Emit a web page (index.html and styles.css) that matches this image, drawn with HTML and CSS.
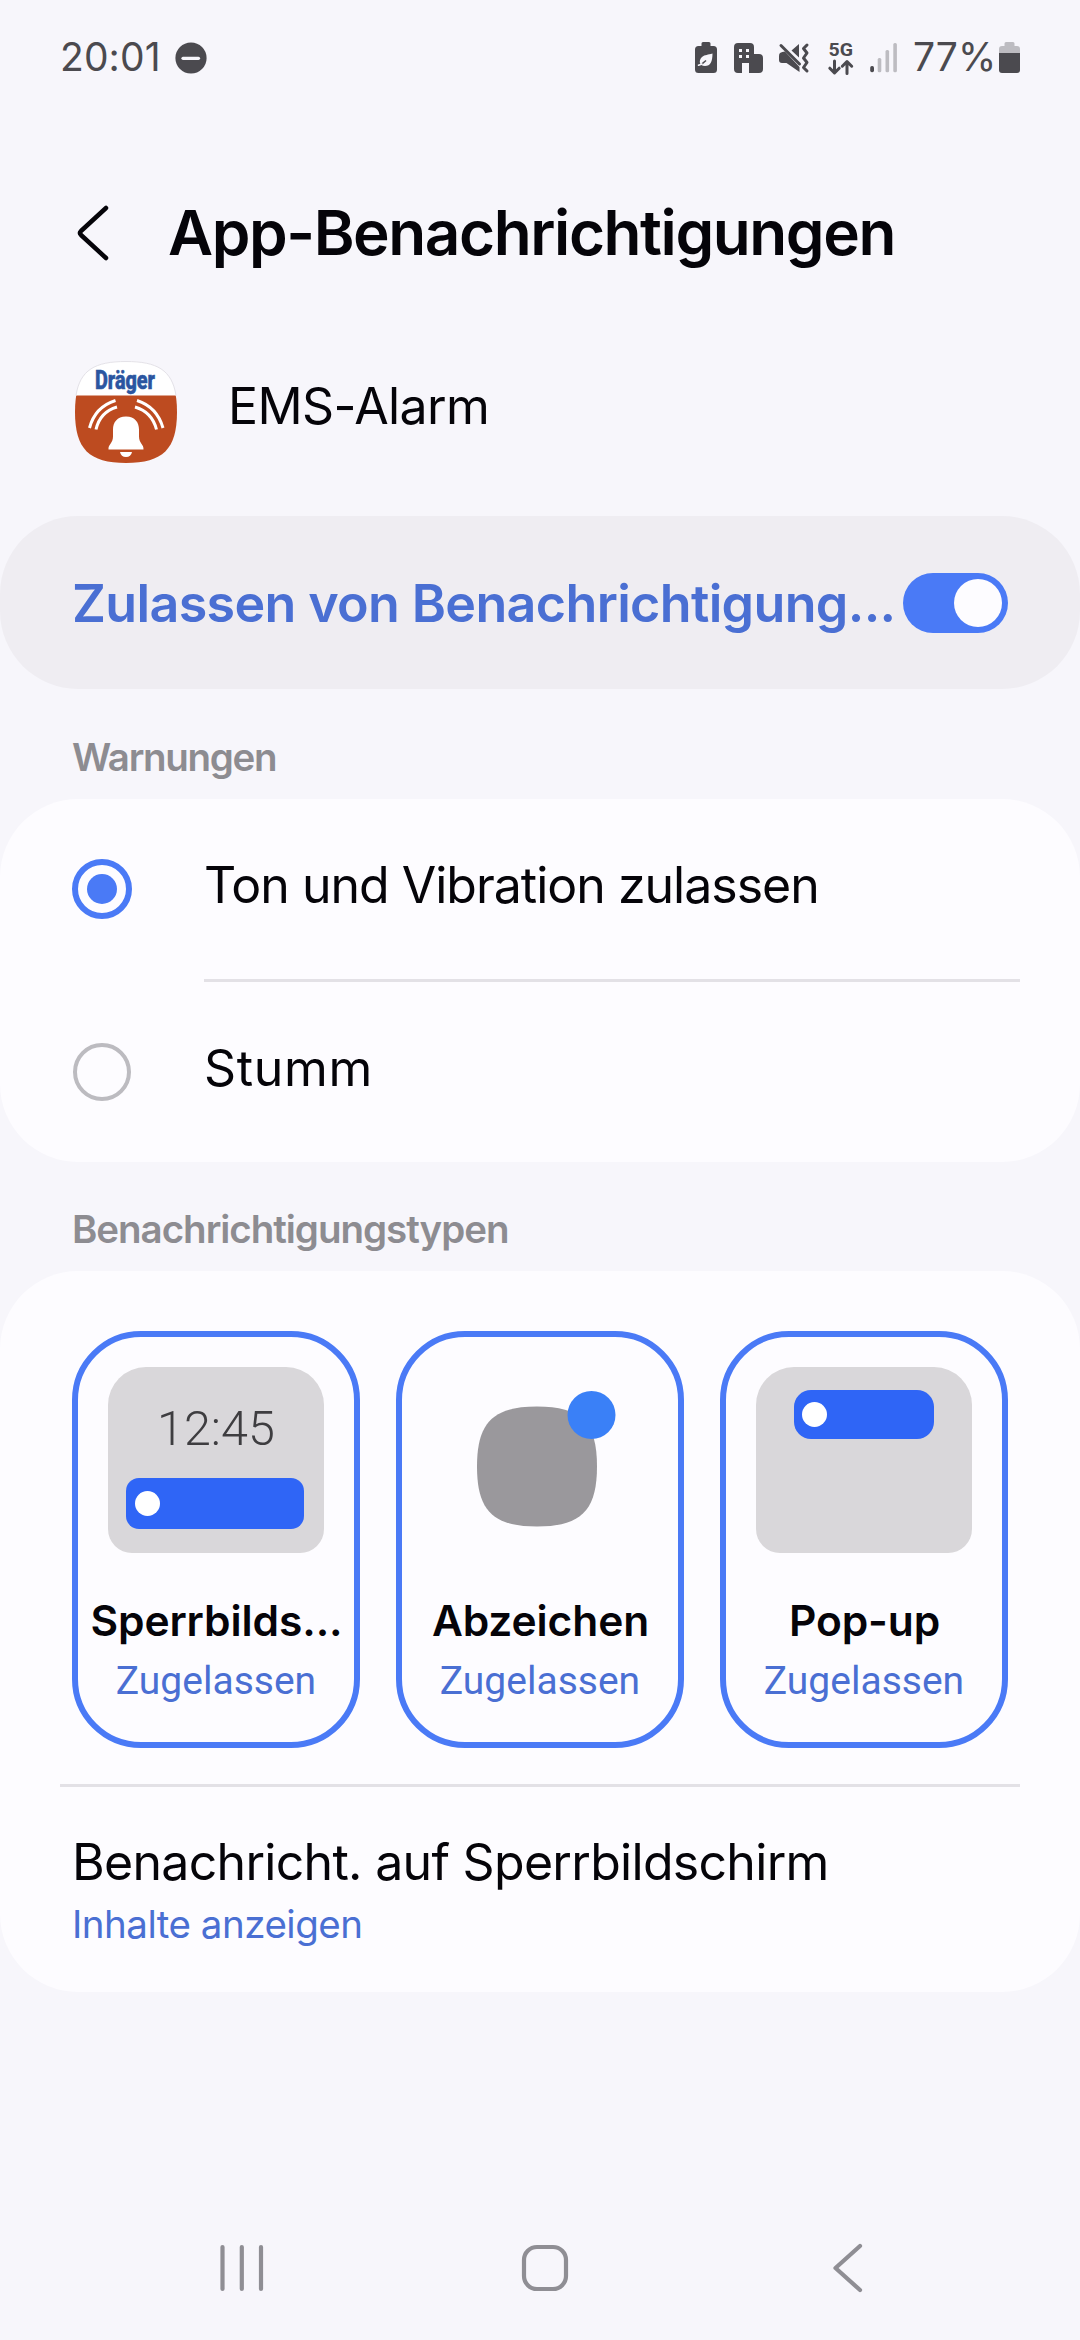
FILE: index.html
```html
<!DOCTYPE html>
<html lang="de">
<head>
<meta charset="utf-8">
<title>App-Benachrichtigungen</title>
<link rel="stylesheet" href="styles.css">
</head>
<body>
<div class="screen">
  <header class="status">
    <span class="time">20:01</span>
    <svg class="dnd" viewBox="0 0 32 32"><circle cx="16" cy="16" r="15.6"/><path d="M8 16.3H23.5"/></svg>
    <div class="status-right">
      <svg class="si leaf" viewBox="695 40 22 36"><path class="dk" d="M703 42h6q1.500 0 1.500 1.500v2.500h3q3.500 0 3.500 3.500v20q0 3.500-3.500 3.500h-15q-3.500 0-3.500-3.500v-20q0-3.500 3.500-3.500h3v-2.500q0-1.500 1.500-1.500z"/><path class="lt" d="M712.500 53.500c0 8-2 12.500-7.500 12.500-6 0-6.500-6-3-9 3-2.500 6-2 10.500-3.500z"/><path class="cut" d="M706 60.500l-4 3.300"/><path class="vein" d="M702 64l-3.500 1.200"/></svg>
      <svg class="si building" viewBox="734 40 29 36"><path class="dk" d="M738 43h12q4 0 4 4v7h5q4 0 4 4v11q0 4-4 4h-10v-10h-7v10h-4q-4 0-4-4v-22q0-4 4-4z"/><g class="lt"><rect x="739" y="49" width="3" height="3"/><rect x="746" y="49" width="3" height="3"/><rect x="739" y="55" width="3" height="3"/><rect x="746" y="55" width="3" height="3"/></g></svg>
      <svg class="si mute" viewBox="779 40 30 36"><path class="dk" d="M791.500 50.500L799 44v13.500zM780 53q-1 1-1 3v4q0 3 3 3h4.500L799.500 72v-5L785 51.500q-3 0-5 1.500z"/><path class="ln" d="M781 45.500L799.500 64"/><path class="ln" d="M807 45l-3.500 3.500 3.500 4.500-3.500 5 3.500 4.500-3.500 5 3.500 3.500"/></svg>
      <svg class="si net" viewBox="828 40 26 36"><text class="net-text" x="828.500" y="56" textLength="24.500" lengthAdjust="spacingAndGlyphs">5G</text><path class="ln" d="M834.500 61v11.500M829.800 68.200l4.700 4.700 4.700-4.700M847 73.500V62M842.300 66.200l4.700-4.700 4.700 4.700"/></svg>
      <svg class="si signal" viewBox="870 40 27 36"><rect class="dk" x="870.200" y="66" width="3.800" height="6.300" rx="1.700"/><g class="dim"><rect x="877.700" y="58" width="3.600" height="14.300" rx="1.500"/><rect x="885.500" y="50" width="3.600" height="22.300" rx="1.500"/><rect x="893.300" y="43" width="3.600" height="29.300" rx="1.500"/></g></svg>
      <span class="percent">77%</span>
      <svg class="si batt" viewBox="999 40 21 36"><path class="dim" d="M1006 42h7q1.500 0 1.500 1.500v2.500h2.500q3 0 3 3v5h-21v-5q0-3 3-3h2.500v-2.500q0-1.500 1.500-1.500z"/><path class="dk" d="M999 53h21v17q0 3-3 3h-15q-3 0-3-3z"/></svg>
    </div>
  </header>

  <div class="titlebar">
    <svg class="back" viewBox="76 202 36 60"><path d="M106 207L81 230q-2 2 0 4L106 257"/></svg>
    <h1>App-Benachrichtigungen</h1>
  </div>

  <div class="app">
    <svg class="app-icon" viewBox="0 0 102 102">
      <defs><clipPath id="squircle"><path d="M51 0C88 0 102 14 102 51S88 102 51 102 0 88 0 51 14 0 51 0z"/></clipPath></defs>
      <g clip-path="url(#squircle)"><rect width="102" height="102" fill="#fff"/><rect y="34.500" width="102" height="68" fill="#bd4b20"/></g>
      <path d="M1 34.500C5 9 20 .5 51 .5S97 9 101 34.500" fill="none" stroke="#e4e2e8"/>
      <text class="brand" x="20" y="28" textLength="60" lengthAdjust="spacingAndGlyphs">Dräger</text>
      <g fill="none" stroke="#fff" stroke-width="3"><path d="M14.500 67Q20 46 40.500 39.500M21 68.500Q25 51 42 46M88 67Q82 46 62 39.500M81.500 68.500Q77 51 60 46"/></g>
      <path fill="#fff" d="M51 55.500c9 0 13 6 13 13v7c0 7 5 8 4.500 13H33.500c-.5-5 4.500-6 4.500-13v-7c0-7 4-13 13-13zM45 91h12q-1 5-6 5t-6-5z"/>
    </svg>
    <span class="app-name">EMS-Alarm</span>
  </div>

  <section class="allow">
    <span class="allow-text">Zulassen von Benachrichtigung...</span>
    <span class="switch"><span class="knob"></span></span>
  </section>

  <h2 class="label l1">Warnungen</h2>
  <section class="card">
    <div class="option"><span class="radio on"><span class="dot"></span></span><span class="option-text t1">Ton und Vibration zulassen</span></div>
    <div class="line inset"></div>
    <div class="option"><span class="radio"></span><span class="option-text t2">Stumm</span></div>
  </section>

  <h2 class="label l2">Benachrichtigungstypen</h2>
  <section class="card types">
    <div class="tiles">
      <div class="tile">
        <div class="preview lock"><span class="clock">12:45</span><span class="bar wide"><span class="pin"></span></span></div>
        <span class="name">Sperrbilds...</span><span class="state">Zugelassen</span>
      </div>
      <div class="tile">
        <svg class="badge" viewBox="0 0 216 186"><path d="M105 39.500c44 0 60 16 60 60s-16 60-60 60-60-16-60-60 16-60 60-60z" fill="#9a989c"/><circle cx="159.500" cy="48" r="24" fill="#3a80f7"/></svg>
        <span class="name">Abzeichen</span><span class="state">Zugelassen</span>
      </div>
      <div class="tile">
        <div class="preview popup"><span class="bar"><span class="pin"></span></span></div>
        <span class="name">Pop-up</span><span class="state">Zugelassen</span>
      </div>
    </div>
    <div class="line"></div>
    <div class="entry"><span class="entry-title">Benachricht. auf Sperrbildschirm</span><span class="entry-sub">Inhalte anzeigen</span></div>
  </section>

  <nav class="nav">
    <svg viewBox="0 0 60 60"><path d="M10.500 9V51M29.800 9V51M49 9V51"/></svg>
    <svg viewBox="0 0 60 60"><rect x="9" y="9" width="42" height="42" rx="13"/></svg>
    <svg viewBox="0 0 60 60"><path d="M42 8L17.500 30 42 52"/></svg>
  </nav>
</div>
</body>
</html>
```
FILE: styles.css
```css
*, *::before { box-sizing: border-box; }
body { margin: 0; background: #f7f6fb; }
.screen {
  width: 1080px; height: 2340px; display: flex; flex-direction: column;
  font-family: Inter, Roboto, sans-serif; color: #050409; white-space: nowrap;
}
svg { display: block; flex: none; overflow: visible; }
h1, h2 { margin: 0; }

/* status bar */
.status { height: 116px; padding: 0 60px; display: flex; align-items: center; color: #4b4a4f; }
.time, .percent { font-size: 39px; line-height: 40px; padding-bottom: 2px; font-weight: 370; }
.time { width: 99px; letter-spacing: .1px; }
.dnd { width: 32px; height: 32px; margin-left: 16px; fill: #4b4a4f; }
.dnd path { stroke: #f7f6fb; stroke-width: 3.200; stroke-linecap: round; }
.status-right { margin-left: auto; display: flex; align-items: center; }
.si { height: 36px; }
.dk { fill: #4b4a4f; }
.lt { fill: #f7f6fb; }
.dim { fill: #bdbcc1; }
.cut { fill: none; stroke: #4b4a4f; stroke-width: 1.500; }
.vein { fill: none; stroke: #f7f6fb; stroke-width: 1.500; stroke-linecap: round; }
.ln { fill: none; stroke: #4b4a4f; stroke-width: 3; stroke-linecap: round; stroke-linejoin: round; }
.leaf { width: 22px; margin-right: 17px; }
.building { width: 29px; margin-right: 16px; }
.mute { width: 30px; margin-right: 19px; }
.net { width: 26px; margin-right: 16px; }
.net-text { font: 700 19px Roboto, sans-serif; fill: #4b4a4f; }
.signal { width: 27px; }
.percent { width: 86px; margin-left: 16px; }
.batt { width: 21px; }

/* header */
.titlebar { height: 233px; padding-left: 76px; display: flex; align-items: center; }
.back { width: 36px; height: 60px; margin-right: 56px; }
.back path { fill: none; stroke: #050409; stroke-width: 4.500; stroke-linecap: round; stroke-linejoin: round; }
h1 { font-size: 62px; line-height: 80px; font-weight: 600; letter-spacing: -1.420px; }
.app { height: 123px; margin-bottom: 44px; padding: 12px 75px 9px; display: flex; }
.app-icon { width: 102px; height: 102px; }
.brand { font: 800 25px Roboto, sans-serif; fill: #2b55a0; stroke: #2b55a0; stroke-width: .6px; }
.app-name { margin-left: 51px; font-size: 50px; line-height: 90px; letter-spacing: -.6px; }

/* main switch */
.allow {
  height: 173px; padding: 0 72px; border-radius: 78px; background: #efedf2;
  display: flex; align-items: center; justify-content: space-between;
}
.allow-text { font-size: 52px; line-height: 60px; padding-top: 3px; font-weight: 600; letter-spacing: -.65px; color: #4a6fd3; }
.switch { width: 105px; height: 60px; padding: 6px; border-radius: 30px; background: #4a7af6; display: flex; justify-content: flex-end; }
.knob { width: 48px; height: 48px; border-radius: 50%; background: #fdfcff; }

/* groups */
.label { padding-left: 72px; font-size: 38.500px; line-height: 50px; font-weight: 600; color: #8d8c91; }
.l1 { height: 110px; padding-top: 43px; letter-spacing: -1.300px; }
.l2 { height: 109px; padding-top: 42px; letter-spacing: -1.030px; }
.card { border-radius: 78px; background: #fdfcff; }
.option { height: 180px; padding-left: 72px; display: flex; align-items: center; }
.radio { width: 60px; height: 60px; display: flex; align-items: center; justify-content: center; }
.radio::before { content: ""; width: 58px; height: 58px; border: 4.500px solid #bcbbc0; border-radius: 50%; }
.radio.on { border: 6px solid #4a7af6; border-radius: 50%; }
.radio.on::before { content: none; }
.dot { width: 30px; height: 30px; border-radius: 50%; background: #4a7af6; }
.option-text { margin-left: 72px; padding-bottom: 8px; font-size: 50px; line-height: 60px; }
.t1 { letter-spacing: -1px; }
.t2 { letter-spacing: .7px; }
.line { height: 3px; margin: 0 60px; background: #e3e1e6; }
.line.inset { margin-left: 204px; }

/* type tiles */
.types { height: 721px; padding-top: 60px; }
.tiles { display: grid; grid-template-columns: repeat(3, 288px); gap: 36px; padding: 0 72px; margin-bottom: 36px; }
.tile { height: 417px; border: 6px solid #4a7af6; border-radius: 69px; padding-top: 30px; display: flex; flex-direction: column; align-items: center; }
.preview { width: 216px; height: 186px; border-radius: 38px 38px 24px 24px; background: #d9d7da; display: flex; flex-direction: column; }
.badge { width: 216px; height: 186px; }
.clock { margin: 37px 0 0 49px; height: 50px; font: 300 48.500px/50px Roboto, sans-serif; color: #3e3d40; }
.bar { width: 140px; height: 49px; border-radius: 17px; background: #2f65f6; display: flex; align-items: center; padding-left: 8px; margin: 23px 0 0 38px; }
.bar.wide { width: 178px; height: 51px; border-radius: 13px; padding-left: 9px; margin: 24px 0 0 18px; }
.pin { width: 25px; height: 25px; border-radius: 50%; background: #fff; }
.name { margin-top: 41px; padding-left: 1px; font-size: 42.500px; line-height: 54px; font-weight: 600; letter-spacing: -.1px; }
.state { margin-top: 8px; font: 400 39px/50px Roboto, sans-serif; color: #4a6fd3; }

.entry { padding: 45px 72px 0; display: flex; flex-direction: column; }
.entry-title { font-size: 50px; line-height: 60px; letter-spacing: -.7px; }
.entry-sub { margin-top: 7px; font-size: 38.500px; line-height: 50px; letter-spacing: -.5px; color: #4a6fd3; }

/* navigation bar */
.nav { height: 144px; margin-top: auto; padding: 0 202px 0 212px; display: flex; align-items: center; justify-content: space-between; }
.nav svg { width: 60px; height: 60px; fill: none; stroke: #8f8e94; stroke-width: 4.200; stroke-linecap: round; stroke-linejoin: round; }
```
